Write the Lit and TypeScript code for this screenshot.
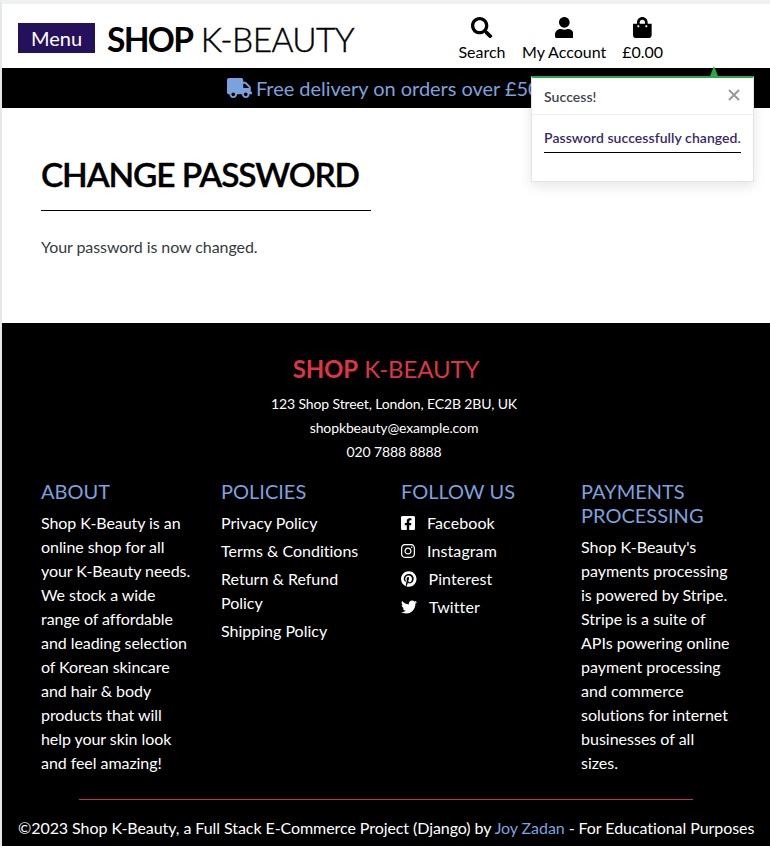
import { LitElement, html, css } from "lit";
import { customElement } from "lit/decorators.js";

type Icon = [viewBox: string, path: string];

const icons: Record<string, Icon> = {
  search: ["0 0 512 512", "M505 442.7L405.3 343c-4.5-4.5-10.6-7-17-7H372c27.6-35.3 44-79.7 44-128C416 93.1 322.9 0 208 0S0 93.1 0 208s93.1 208 208 208c48.3 0 92.7-16.4 128-44v16.3c0 6.4 2.5 12.5 7 17l99.7 99.7c9.4 9.4 24.6 9.4 33.9 0l28.3-28.3c9.4-9.4 9.4-24.6.1-34zM208 336c-70.7 0-128-57.2-128-128 0-70.7 57.2-128 128-128 70.7 0 128 57.2 128 128 0 70.7-57.2 128-128 128z"],
  user: ["0 0 448 512", "M224 256c70.7 0 128-57.3 128-128S294.7 0 224 0 96 57.3 96 128s57.3 128 128 128zm89.6 32h-16.7c-22.2 10.2-46.9 16-72.9 16s-50.6-5.8-72.9-16h-16.7C60.2 288 0 348.2 0 422.4V464c0 26.5 21.5 48 48 48h352c26.5 0 48-21.5 48-48v-41.6c0-74.2-60.2-134.4-134.4-134.4z"],
  bag: ["0 0 448 512", "M352 160v-32C352 57.42 294.579 0 224 0 153.42 0 96 57.42 96 128v32H0v272c0 44.183 35.817 80 80 80h288c44.183 0 80-35.817 80-80V160h-96zm-192-32c0-35.29 28.71-64 64-64s64 28.71 64 64v32H160v-32zm160 120c-13.255 0-24-10.745-24-24s10.745-24 24-24 24 10.745 24 24-10.745 24-24 24zm-192 0c-13.255 0-24-10.745-24-24s10.745-24 24-24 24 10.745 24 24-10.745 24-24 24z"],
  truck: ["0 0 640 512", "M624 352h-16V243.9c0-12.7-5.1-24.9-14.1-33.9L494 110.1c-9-9-21.2-14.1-33.9-14.1H416V48c0-26.5-21.5-48-48-48H48C21.5 0 0 21.5 0 48v320c0 26.5 21.5 48 48 48h16c0 53 43 96 96 96s96-43 96-96h128c0 53 43 96 96 96s96-43 96-96h48c8.8 0 16-7.2 16-16v-32c0-8.8-7.2-16-16-16zM160 464c-26.5 0-48-21.5-48-48s21.5-48 48-48 48 21.5 48 48-21.5 48-48 48zm320 0c-26.5 0-48-21.5-48-48s21.5-48 48-48 48 21.5 48 48-21.5 48-48 48zm80-208H416V144h44.1l99.9 99.9V256z"],
  facebook: ["0 0 448 512", "M400 32H48A48 48 0 0 0 0 80v352a48 48 0 0 0 48 48h137.25V327.69h-63V256h63v-54.64c0-62.15 37-96.48 93.67-96.48 27.14 0 55.52 4.84 55.52 4.84v61h-31.27c-30.81 0-40.42 19.12-40.42 38.73V256h68.78l-11 71.69h-57.78V480H400a48 48 0 0 0 48-48V80a48 48 0 0 0-48-48z"],
  instagram: ["0 0 448 512", "M224.1 141c-63.6 0-114.9 51.3-114.9 114.9s51.3 114.9 114.9 114.9S339 319.5 339 255.9 287.7 141 224.1 141zm0 189.6c-41.1 0-74.7-33.5-74.7-74.7s33.5-74.7 74.7-74.7 74.7 33.5 74.7 74.7-33.6 74.7-74.7 74.7zm146.4-194.3c0 14.9-12 26.8-26.8 26.8-14.9 0-26.8-12-26.8-26.8s12-26.8 26.8-26.8 26.8 12 26.8 26.8zm76.1 27.2c-1.7-35.9-9.9-67.7-36.2-93.9-26.2-26.2-58-34.4-93.9-36.2-37-2.1-147.9-2.1-184.9 0-35.8 1.7-67.6 9.9-93.9 36.1s-34.4 58-36.2 93.9c-2.1 37-2.1 147.9 0 184.9 1.7 35.9 9.9 67.7 36.2 93.9s58 34.4 93.9 36.2c37 2.1 147.9 2.1 184.9 0 35.9-1.7 67.7-9.9 93.9-36.2 26.2-26.2 34.4-58 36.2-93.9 2.1-37 2.1-147.8 0-184.8zM398.8 388c-7.8 19.6-22.9 34.7-42.6 42.6-29.5 11.7-99.5 9-132.1 9s-102.7 2.6-132.1-9c-19.6-7.8-34.7-22.9-42.6-42.6-11.7-29.5-9-99.5-9-132.1s-2.6-102.7 9-132.1c7.8-19.6 22.9-34.7 42.6-42.6 29.5-11.7 99.5-9 132.1-9s102.7-2.6 132.1 9c19.6 7.8 34.7 22.9 42.6 42.6 11.7 29.5 9 99.5 9 132.1s2.7 102.7-9 132.1z"],
  pinterest: ["0 0 496 512", "M496 256c0 137-111 248-248 248-25.6 0-50.2-3.9-73.4-11.1 10.1-16.5 25.2-43.5 30.8-65 3-11.6 15.4-59 15.4-59 8.1 15.4 31.7 28.5 56.8 28.5 74.8 0 128.7-68.8 128.7-154.3 0-81.9-66.9-143.2-152.9-143.2-107 0-163.9 71.8-163.9 150.1 0 36.4 19.4 81.7 50.3 96.1 4.7 2.2 7.2 1.2 8.3-3.3.8-3.4 5-20.3 6.9-28.1.6-2.5.3-4.7-1.7-7.1-10.1-12.5-18.3-35.3-18.3-56.6 0-54.7 41.4-107.6 112-107.6 60.9 0 103.6 41.5 103.6 100.9 0 67.1-33.9 113.6-78 113.6-24.3 0-42.6-20.1-36.7-44.8 7-29.5 20.5-61.3 20.5-82.6 0-19-10.2-34.9-31.4-34.9-24.9 0-44.9 25.7-44.9 60.2 0 22 7.4 36.8 7.4 36.8s-24.5 103.8-29 123.2c-5 21.4-3 51.6-.9 71.2C65.4 450.9 0 361.1 0 256 0 119 111 8 248 8s248 111 248 248z"],
  twitter: ["0 0 512 512", "M459.37 151.716c.325 4.548.325 9.097.325 13.645 0 138.72-105.583 298.558-298.558 298.558-59.452 0-114.68-17.219-161.137-47.106 8.447.974 16.568 1.299 25.34 1.299 49.055 0 94.213-16.568 130.274-44.832-46.132-.975-84.792-31.188-98.112-72.772 6.498.974 12.995 1.624 19.818 1.624 9.421 0 18.843-1.3 27.614-3.573-48.081-9.747-84.143-51.98-84.143-102.985v-1.299c13.969 7.797 30.214 12.67 47.431 13.319-28.264-18.843-46.781-51.005-46.781-87.391 0-19.492 5.197-37.36 14.294-52.954 51.655 63.675 129.3 105.258 216.365 109.807-1.624-7.797-2.599-15.918-2.599-24.04 0-57.828 46.782-104.934 104.934-104.934 30.213 0 57.502 12.67 76.67 33.137 23.715-4.548 46.456-13.32 66.599-25.34-7.798 24.366-24.366 44.833-46.132 57.827 21.117-2.273 41.584-8.122 60.426-16.243-14.292 20.791-32.161 39.308-52.628 54.253z"],
};

const icon = (name: string) => html`<svg class="icon" viewBox=${icons[name][0]} aria-hidden="true"><path d=${icons[name][1]}></path></svg>`;

const socials = [
  ["facebook", "Facebook"],
  ["instagram", "Instagram"],
  ["pinterest", "Pinterest"],
  ["twitter", "Twitter"],
];

@customElement("app-root")
class AppRoot extends LitElement {
  static styles = css`
    :host {
      display: block;
      box-sizing: border-box;
      position: relative;
      height: 846px;
      overflow: hidden;
      border-left: 2px solid #e4e8e7;
      border-top: 4px solid #eef1f0;
      background: #fff;
      font: 400 16px/24px Lato, sans-serif;
      font-variant-ligatures: none;
      color: #000;
    }
    * { box-sizing: border-box; }
    h1, h2, h3, p, ul { margin: 0; padding: 0; font-weight: 400; }
    ul { list-style: none; }
    a { color: inherit; text-decoration: none; }
    .icon { display: block; height: 1em; fill: currentColor; flex: none; }

    .header { display: flex; height: 64px; padding-left: 16px; }
    .menu {
      width: 77px; height: 30px; margin-top: 19px; padding: 0; border: 0;
      background: #25115b; color: #fff; font: 400 20px/31px Lato, sans-serif;
    }
    .brand { margin: 13px 0 0 12px; width: 339px; font-size: 33.5px; line-height: 44px; font-weight: 300; white-space: nowrap; letter-spacing: -.6px; -webkit-text-stroke: .4px; }
    .brand b { font-weight: 700; letter-spacing: -1.7px; -webkit-text-stroke: 0; }
    .tools { display: flex; gap: 16px; padding-top: 13px; margin-left: 12px; }
    .tool { display: flex; flex-direction: column; align-items: center; }
    .tool:first-child { width: 48px; }
    .tool .icon { height: 21.33px; margin-bottom: 2px; }

    .banner {
      display: flex; justify-content: center; align-items: center; gap: 4px;
      height: 40px; background: #000; color: #7ba2df; font-size: 20px; letter-spacing: -.03px;
    }
    .banner .icon { height: 20px; }

    .main { height: 215px; padding: 44px 39px 0; }
    .title { width: 330px; height: 59px; border-bottom: 1px solid #000; font-size: 33.5px; line-height: 44px; font-weight: 600; white-space: nowrap; letter-spacing: -1.15px; -webkit-text-stroke: .35px; }
    .note { margin-top: 24px; color: #343a40; letter-spacing: -.07px; }

    .footer { height: 523px; background: #000; color: #fff; padding-top: 31px; }
    .contact { width: 768px; text-align: center; font-size: 14px; padding-left: 16px; letter-spacing: -.12px; }
    .logo { color: #dc3545; font-size: 24px; line-height: 29px; margin-bottom: 9px; padding-right: 16px; }
    .columns { display: grid; grid-template-columns: repeat(4, 150px); column-gap: 30px; padding: 15px 39px 0; }
    .heading { font-size: 20px; line-height: 24px; color: #7ba2df; margin-bottom: 8px; }
    .about { letter-spacing: -.06px; }
    .links li { margin-bottom: 4px; }
    .social { display: flex; align-items: center; gap: 12px; white-space: nowrap; letter-spacing: .1px; }
    .rule { width: 614px; height: 1px; margin: 24px 0 16px 77px; background: #c83240; }
    .copy { padding-left: 16px; white-space: nowrap; letter-spacing: -.068px; }
    .copy a { color: #7ba2df; }

    .toast {
      position: absolute; left: 529px; top: 72px; width: 223px; height: 106px;
      border: 1px solid #e3e3e3; border-top: 2px solid #28a745; background: #fff;
      box-shadow: 0 4px 12px rgba(0, 0, 0, .1);
      font-size: 14px; font-weight: 600; letter-spacing: .06px;
    }
    .arrow {
      position: absolute; left: 178px; top: -12px;
      border: 4px solid transparent; border-top: 0; border-bottom: 10px solid #28a745;
    }
    .toast-head {
      display: flex; justify-content: space-between; height: 37px; padding: 7px 13px 0 12px;
      border-bottom: 1px solid #eee; color: #42474c;
    }
    .close { width: 12px; height: 12px; margin-top: 4px; stroke: #999; stroke-width: 2; }
    .message { margin: 11px 12px 0; height: 27px; border-bottom: 1px solid #000; color: #3b2768; white-space: nowrap; font-weight: 600; }
  `;

  render() {
    return html`
      <header class="header">
        <button class="menu">Menu</button>
        <a class="brand"><b>SHOP</b> K-BEAUTY</a>
        <nav class="tools">
          <a class="tool">${icon("search")}<span>Search</span></a>
          <a class="tool">${icon("user")}<span>My Account</span></a>
          <a class="tool">${icon("bag")}<span>£0.00</span></a>
        </nav>
      </header>
      <div class="banner">${icon("truck")}<span>Free delivery on orders over £50!</span></div>
      <main class="main">
        <h1 class="title">CHANGE PASSWORD</h1>
        <p class="note">Your password is now changed.</p>
      </main>
      <footer class="footer">
        <div class="contact">
          <h2 class="logo"><b>SHOP</b> K-BEAUTY</h2>
          <p>123 Shop Street, London, EC2B 2BU, UK</p>
          <p>shopkbeauty@example.com</p>
          <p>020 7888 8888</p>
        </div>
        <div class="columns">
          <section>
            <h3 class="heading">ABOUT</h3>
            <p class="about">Shop K-Beauty is an online shop for all your K-Beauty needs. We stock a wide range of affordable and leading selection of Korean skincare and hair &amp; body products that will help your skin look and feel amazing!</p>
          </section>
          <section>
            <h3 class="heading">POLICIES</h3>
            <ul class="links">
              ${["Privacy Policy", "Terms & Conditions", "Return & Refund Policy", "Shipping Policy"].map((t) => html`<li><a>${t}</a></li>`)}
            </ul>
          </section>
          <section>
            <h3 class="heading">FOLLOW US</h3>
            <ul class="links">
              ${socials.map(([name, label]) => html`<li><a class="social">${icon(name)}<span>${label}</span></a></li>`)}
            </ul>
          </section>
          <section>
            <h3 class="heading">PAYMENTS PROCESSING</h3>
            <p>Shop K-Beauty's payments processing is powered by Stripe. Stripe is a suite of APIs powering online payment processing and commerce solutions for internet businesses of all sizes.</p>
          </section>
        </div>
        <div class="rule"></div>
        <p class="copy">©2023 Shop K-Beauty, a Full Stack E-Commerce Project (Django) by <a>Joy Zadan</a> - For Educational Purposes</p>
      </footer>
      <aside class="toast">
        <span class="arrow"></span>
        <div class="toast-head">
          <span>Success!</span>
          <svg class="close" viewBox="0 0 12 12"><path d="M1 1L11 11M11 1L1 11"></path></svg>
        </div>
        <p class="message">Password successfully changed.</p>
      </aside>
    `;
  }
}
